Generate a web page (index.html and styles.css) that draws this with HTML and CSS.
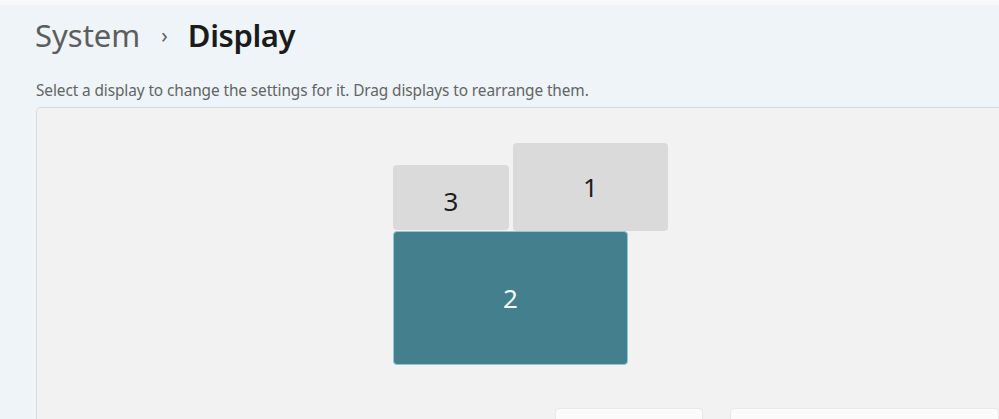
FILE: index.html
```html
<!DOCTYPE html>
<html lang="en">
<head>
<meta charset="utf-8">
<link rel="stylesheet" href="styles.css">
</head>
<body>
<div class="topstrip"></div>
<div class="page">
  <h1 class="crumbs"><span class="parent">System</span><span class="sep">›</span><span class="current">Display</span></h1>
  <p class="hint">Select a display to change the settings for it. Drag displays to rearrange them.</p>
  <div class="panel">
    <div class="canvas">
      <div class="mon mon3">3</div>
      <div class="mon mon1">1</div>
      <div class="mon mon2">2</div>
    </div>
    <div class="actions">
      <div class="btn btn-identify"></div>
      <div class="btn btn-detect"></div>
    </div>
  </div>
</div>
</body>
</html>
```
FILE: styles.css
```css
html, body {
  margin: 0;
  padding: 0;
  overflow: hidden;
}
body {
  width: 999px;
  height: 419px;
  background: #eef4f7;
  font-family: "Noto Sans", "Open Sans", sans-serif;
}
.topstrip {
  height: 5px;
  background: #f9f9f9;
}
.page {
  padding-left: 35px;
}
.crumbs {
  margin: 0;
  padding-top: 11px;
  height: 38px;
  font-size: 31px;
  line-height: 38px;
  font-weight: 400;
  display: flex;
  align-items: baseline;
}
.parent {
  color: #5b5d5e;
}
.sep {
  color: #5b5d5e;
  font-size: 21px;
  margin: 0 20px 0 21px;
  position: relative;
  top: -4px;
}
.current {
  color: #1b1b1b;
  font-weight: 600;
  letter-spacing: -0.4px;
}
.hint {
  margin: 0;
  padding-top: 27px;
  padding-left: 1px;
  font-size: 15.4px;
  line-height: 19px;
  color: #626466;
  letter-spacing: -0.1px;
}
.panel {
  margin-top: 7px;
  margin-left: 1px;
  background: #f2f2f2;
  border-top: 1.5px solid #d4d7d9;
  border-left: 1.5px solid #d7dadc;
  border-top-left-radius: 5px;
  height: 320px;
}
.canvas {
  position: relative;
  height: 300px;
}
.mon {
  position: absolute;
  box-sizing: border-box;
  display: flex;
  align-items: center;
  justify-content: center;
  border-radius: 4px;
  background: #dadada;
  color: #1e1e1e;
  font-size: 26px;
}
.mon3 {
  left: 356px;
  top: 57px;
  width: 116px;
  height: 65px;
  padding-top: 6px;
}
.mon1 {
  left: 476px;
  top: 35px;
  width: 155px;
  height: 88px;
  padding-bottom: 1px;
}
.mon2 {
  left: 356px;
  top: 123px;
  width: 235px;
  height: 134px;
  background: #437f8c;
  border: 1px solid #8ec9d2;
  color: #f4fbfc;
  padding-bottom: 0;
}
.actions {
  display: flex;
  gap: 27px;
  padding-left: 518px;
  padding-top: 0;
}
.btn {
  height: 30px;
  background: #fbfbfb;
  border: 1px solid #e8e8e8;
  border-radius: 4px;
}
.btn-identify {
  width: 146px;
}
.btn-detect {
  flex: 1;
}
```
